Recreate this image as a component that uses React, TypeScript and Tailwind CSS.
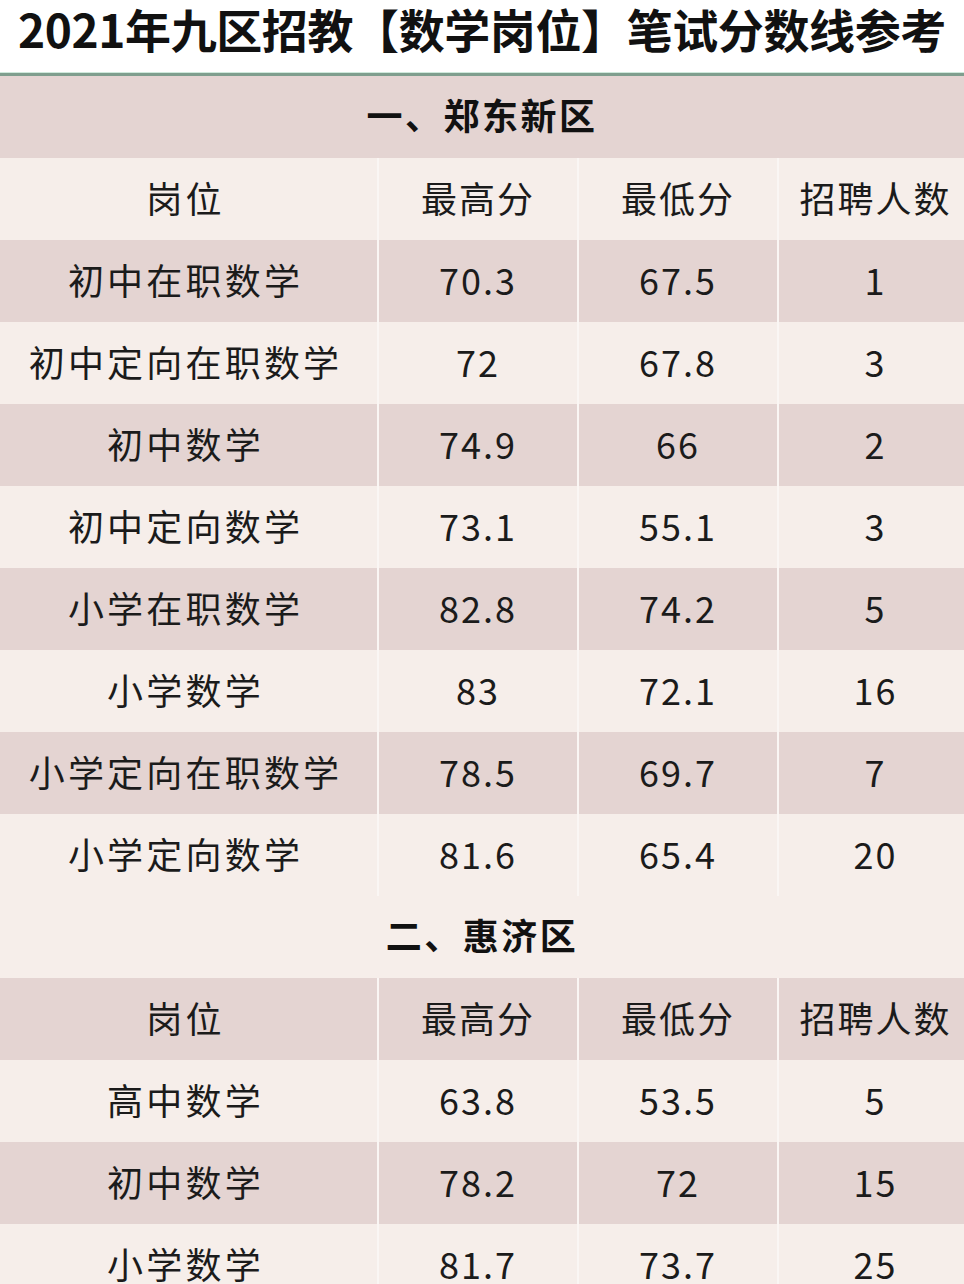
import React from "react";

const DARK = "bg-[#e4d4d2]";
const LIGHT = "bg-[#f6eeea]";

type Row = [string, string, string, string];

const sec1: Row[] = [
  ["初中在职数学", "70.3", "67.5", "1"],
  ["初中定向在职数学", "72", "67.8", "3"],
  ["初中数学", "74.9", "66", "2"],
  ["初中定向数学", "73.1", "55.1", "3"],
  ["小学在职数学", "82.8", "74.2", "5"],
  ["小学数学", "83", "72.1", "16"],
  ["小学定向在职数学", "78.5", "69.7", "7"],
  ["小学定向数学", "81.6", "65.4", "20"],
];

const sec2: Row[] = [
  ["高中数学", "63.8", "53.5", "5"],
  ["初中数学", "78.2", "72", "15"],
  ["小学数学", "81.7", "73.7", "25"],
];

function TableRow({ cells, dark }: { cells: Row; dark: boolean }) {
  return (
    <div className={`grid grid-cols-[377px_200px_200px_187px] h-[82px] ${dark ? DARK : LIGHT}`}>
      {cells.map((c, i) => (
        <div
          key={i}
          className={`flex items-center justify-center pb-[4px] text-[36px] text-[#1b1b1b] ${
            i === 0 ? "tracking-[3.2px] pr-[6px]" : "tracking-[2px] border-l-2 border-[#faf6f4]"
          } ${i === 3 ? "pl-[8px]" : ""}`}
        >
          {c}
        </div>
      ))}
    </div>
  );
}

function SectionHeader({ title, dark }: { title: string; dark: boolean }) {
  return (
    <div
      className={`h-[82px] flex items-center justify-center pb-[6px] text-[36px] font-bold tracking-[2.5px] text-[#111] ${
        dark ? DARK : LIGHT
      }`}
    >
      {title}
    </div>
  );
}

export default function App() {
  const font = { fontFamily: '"Noto Sans CJK SC", "Noto Sans", sans-serif' };
  const header: Row = ["岗位", "最高分", "最低分", "招聘人数"];
  return (
    <div className="w-[964px] h-[1284px] overflow-hidden bg-white" style={font}>
      <div className="h-[72px] flex justify-center pt-[4px] bg-white">
        <h1 className="text-[46px] leading-[48px] font-bold text-[#111] tracking-[-0.4px] whitespace-nowrap">
          2021年九区招教【数学岗位】笔试分数线参考
        </h1>
      </div>
      <div className="h-[1px] bg-[#cfe9dc]" />
      <div className="h-[3px] bg-[#7f9e8e]" />
      <SectionHeader title="一、郑东新区" dark={true} />
      <TableRow cells={header} dark={false} />
      {sec1.map((r, i) => (
        <TableRow key={i} cells={r} dark={i % 2 === 0} />
      ))}
      <SectionHeader title="二、惠济区" dark={false} />
      <TableRow cells={header} dark={true} />
      {sec2.map((r, i) => (
        <TableRow key={i} cells={r} dark={i % 2 === 1} />
      ))}
    </div>
  );
}
